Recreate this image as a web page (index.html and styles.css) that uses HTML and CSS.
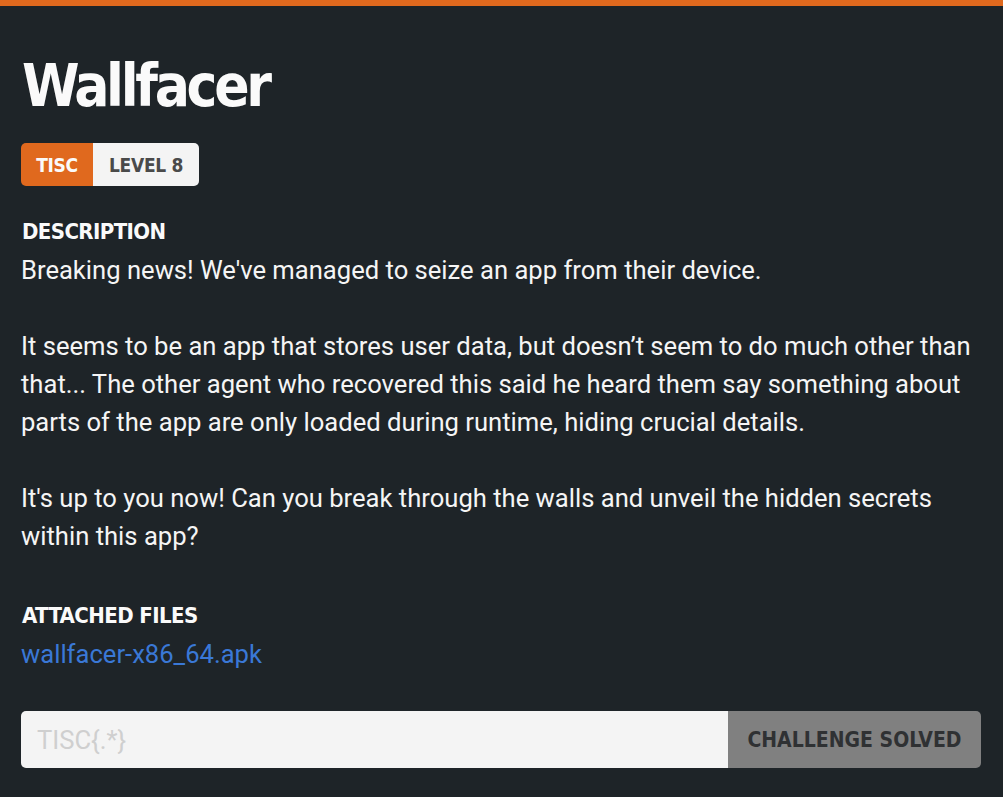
FILE: index.html
```html
<!DOCTYPE html>
<html lang="en">
<head>
<meta charset="utf-8">
<title>Wallfacer</title>
<link rel="stylesheet" href="styles.css">
</head>
<body>
<div class="topbar"></div>
<main class="challenge">
  <h1 class="title">Wallfacer</h1>
  <div class="tags">
    <span class="tag tag-cat">TISC</span>
    <span class="tag tag-level">LEVEL 8</span>
  </div>
  <section class="section">
    <h2 class="section-head">DESCRIPTION</h2>
    <div class="desc">
      <p>Breaking news! We've managed to seize an app from their device.</p>
      <p>It seems to be an app that stores user data, but doesn’t seem to do much other than that... The other agent who recovered this said he heard them say something about parts of the app are only loaded during runtime, hiding crucial details.</p>
      <p>It's up to you now! Can you break through the walls and unveil the hidden secrets within this app?</p>
    </div>
  </section>
  <section class="section files">
    <h2 class="section-head">ATTACHED FILES</h2>
    <a class="file-link" href="#">wallfacer-x86_64.apk</a>
  </section>
  <form class="submit-row">
    <input class="flag-input" type="text" placeholder="TISC{.*}">
    <button class="submit-btn" type="button">CHALLENGE SOLVED</button>
  </form>
</main>
</body>
</html>
```
FILE: styles.css
```css
html, body {
  margin: 0;
  padding: 0;
  background: #1e2428;
}
body {
  font-family: Roboto, "Liberation Sans", sans-serif;
  color: #f5f5f5;
}
.topbar {
  height: 6px;
  background: #e0691e;
}
.challenge {
  padding: 0 22px 0 21px;
}
.title {
  margin: 45px 0 0 1px;
  font-family: "DejaVu Sans", sans-serif;
  font-stretch: condensed;
  font-weight: 700;
  font-size: 58px;
  line-height: 70px;
  color: #fafafa;
  letter-spacing: -3.3px;
}
.tags {
  display: flex;
  margin-top: 22px;
}
.tag {
  height: 43px;
  display: flex;
  align-items: center;
  font-family: "DejaVu Sans", sans-serif;
  font-stretch: condensed;
  font-weight: 700;
  font-size: 19px;
  letter-spacing: -0.3px;
}
.tag-cat {
  background: #e0691e;
  color: #fafafa;
  padding: 0 16px;
  border-radius: 5px 0 0 5px;
  width: 40px;
  justify-content: center;
}
.tag-level {
  background: #f4f4f4;
  color: #4a4a4a;
  padding: 0 16px;
  border-radius: 0 5px 5px 0;
}
.section-head {
  margin: 33px 0 0 1px;
  font-family: "DejaVu Sans", sans-serif;
  font-stretch: condensed;
  font-weight: 700;
  font-size: 22px;
  line-height: 26px;
  color: #fafafa;
  letter-spacing: -0.6px;
}
.desc {
  margin-top: 6px;
  font-size: 25.6px;
  line-height: 38px;
}
.desc p {
  margin: 0 0 38px;
}
.desc p:last-child {
  margin-bottom: 0;
}
.files .section-head {
  margin-top: 48px;
}
.file-link {
  display: block;
  margin-top: 6px;
  font-size: 25.6px;
  line-height: 38px;
  color: #3a78d6;
  text-decoration: none;
}
.submit-row {
  display: flex;
  margin: 38px 0 0;
  height: 57px;
}
.flag-input {
  flex: 1;
  min-width: 0;
  border: 0;
  margin: 0;
  padding: 0 16px;
  background: #f4f4f4;
  border-radius: 5px 0 0 5px;
  font-family: Roboto, sans-serif;
  font-size: 25.6px;
  color: #333;
  outline: none;
}
.flag-input::placeholder {
  color: #cfcfcf;
}
.submit-btn {
  width: 253px;
  border: 0;
  margin: 0;
  background: #808080;
  color: #2f3133;
  border-radius: 0 5px 5px 0;
  font-family: "DejaVu Sans", sans-serif;
  font-stretch: condensed;
  font-weight: 700;
  font-size: 21px;
  letter-spacing: 0;
}
```
